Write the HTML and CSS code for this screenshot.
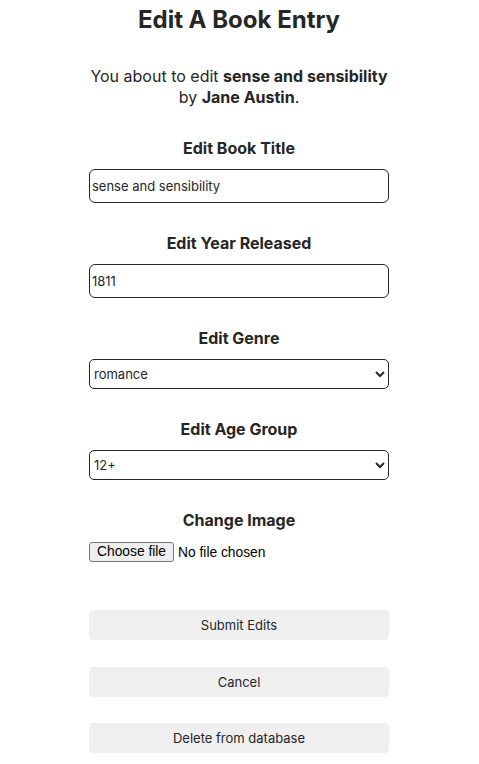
FILE: index.html
```html
<!DOCTYPE html>
<html lang="en">
<head>
    <meta charset="UTF-8">
    <title>Edit A Book Entry</title>
    <meta name="viewport" content="width=device-width, initial-scale=1.0">
    <link rel="stylesheet" href="styles.css">
</head>
<body>
    <div class="container">
        <h1>Edit A Book Entry</h1>
        <p class="intro">You about to edit <b>sense and sensibility</b><br>by <b>Jane Austin</b>.</p>

        <form class="edit-form">
            <div class="field">
                <label for="title">Edit Book Title</label>
                <input type="text" id="title" class="text-input" value="sense and sensibility">
            </div>

            <div class="field">
                <label for="year">Edit Year Released</label>
                <input type="text" id="year" class="text-input" value="1811">
            </div>

            <div class="field">
                <label for="genre">Edit Genre</label>
                <select id="genre" class="select-input">
                    <option selected>romance</option>
                    <option>fantasy</option>
                    <option>mystery</option>
                </select>
            </div>

            <div class="field">
                <label for="age">Edit Age Group</label>
                <select id="age" class="select-input">
                    <option selected>12+</option>
                    <option>16+</option>
                    <option>18+</option>
                </select>
            </div>

            <div class="field">
                <label for="image">Change Image</label>
                <div class="file-picker">
                    <input type="file" id="image" class="file-input">
                    <label for="image" class="file-button">Choose file</label>
                    <span class="file-name">No file chosen</span>
                </div>
            </div>

            <div class="actions">
                <button type="submit">Submit Edits</button>
                <button type="button">Cancel</button>
                <button type="button">Delete from database</button>
            </div>
        </form>
    </div>
</body>
</html>
```

FILE: styles.css
```css
body {
    font-family: 'Inter', sans-serif;
    color: #262626;
    background: #fff;
    margin: 0;
    padding: 0;
}
.container {
    display: flex;
    flex-direction: column;
    align-items: center;
    text-align: center;
    padding-right: 1px;
}
h1 {
    font-size: 24px;
    line-height: 30px;
    font-weight: 700;
    margin: 5px 0 0;
}
.intro {
    font-size: 16px;
    line-height: 21px;
    margin: 31px 0 30px;
}
.intro b {
    font-weight: 700;
}
.edit-form {
    width: 300px;
    display: flex;
    flex-direction: column;
}
.field {
    display: flex;
    flex-direction: column;
    align-items: stretch;
    margin-bottom: 30px;
}
.field > label {
    font-size: 16px;
    line-height: 20px;
    font-weight: 700;
    margin-bottom: 11px;
}
.text-input {
    box-sizing: border-box;
    height: 34px;
    font-family: inherit;
    font-size: 13px;
    color: #262626;
    padding: 0 2px;
    border: 1px solid #262626;
    border-radius: 6px;
    background: #fff;
}
.select-input {
    box-sizing: border-box;
    height: 30px;
    font-family: inherit;
    font-size: 13px;
    color: #262626;
    padding: 0;
    border: 1px solid #262626;
    border-radius: 5px;
    background: #fff;
}
.file-picker {
    display: flex;
    align-items: center;
    gap: 4px;
    font-family: 'Liberation Sans', Arial, sans-serif;
    font-size: 13.8px;
    color: #000;
    margin-top: 1px;
}
.file-input {
    display: none;
}
.file-button {
    box-sizing: border-box;
    height: 20px;
    line-height: 18px;
    padding: 0 7px;
    background: #efefef;
    border: 1px solid #767676;
    border-radius: 3px;
    cursor: pointer;
}
.actions {
    display: flex;
    flex-direction: column;
    gap: 26.5px;
    margin-top: 18px;
}
.actions button {
    height: 30px;
    font-family: inherit;
    font-size: 13px;
    color: #262626;
    background: #efefef;
    border: none;
    border-radius: 4px;
    cursor: pointer;
}
.actions button:hover {
    background: #e4e4e4;
}
```
